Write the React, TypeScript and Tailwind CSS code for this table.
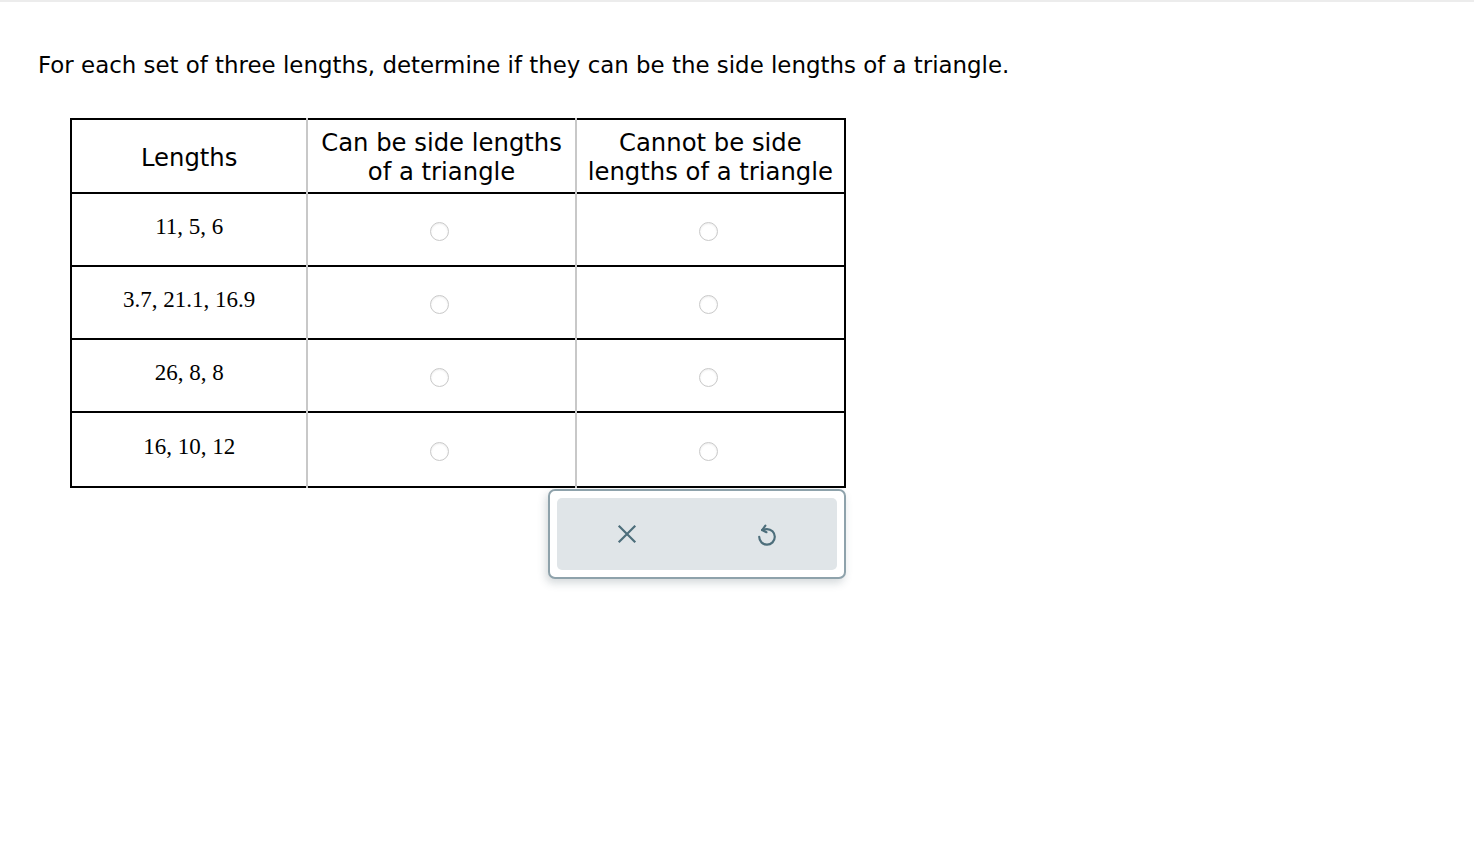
import React from "react";

const rows = ["11, 5, 6", "3.7, 21.1, 16.9", "26, 8, 8", "16, 10, 12"];

function Radio() {
  return (
    <span className="inline-block w-[19px] h-[19px] rounded-full border border-[#c9c9c9] bg-white shadow-[inset_0_1px_2px_rgba(0,0,0,0.08)] translate-y-[5px] -translate-x-[2px]" />
  );
}

export default function App() {
  return (
    <div className="min-h-screen bg-white border-t-2 border-[#ececec] pl-[38px] pt-[49px] text-black">
      <p className="font-['DejaVu_Sans',Verdana,sans-serif] text-[22.9px] leading-[28px]">
        For each set of three lengths, determine if they can be the side lengths of a triangle.
      </p>

      <div className="ml-[32px] mt-[39px] w-[776px]">
        <table className="border-collapse border-2 border-black w-[776px]">
          <thead>
            <tr className="h-[74px] border-b-2 border-black font-['DejaVu_Sans',Verdana,sans-serif] text-[24.3px] leading-[29px]">
              <th className="w-[237px] pt-[2px] font-normal border-r-2 border-[#c8c8c8]">Lengths</th>
              <th className="w-[269px] pt-[2px] font-normal border-r-2 border-[#c8c8c8]">
                Can be side lengths
                <br />
                of a triangle
              </th>
              <th className="w-[270px] pt-[2px] font-normal">
                Cannot be side
                <br />
                lengths of a triangle
              </th>
            </tr>
          </thead>
          <tbody>
            {rows.map((r, i) => (
              <tr
                key={r}
                className={`${i === 3 ? "h-[75px]" : "h-[73px] border-b-2 border-black"}`}
              >
                <td className="text-center pb-[5px] font-['Liberation_Serif','Times_New_Roman',serif] text-[23px] border-r-2 border-[#c8c8c8]">
                  {r}
                </td>
                <td className="text-center border-r-2 border-[#c8c8c8]">
                  <Radio />
                </td>
                <td className="text-center">
                  <Radio />
                </td>
              </tr>
            ))}
          </tbody>
        </table>

        <div className="flex justify-end mt-[1px]">
          <div className="w-[298px] h-[90px] border-2 border-[#8ea2ab] rounded-[7px] bg-white p-[7px] shadow-[-2px_4px_8px_rgba(60,80,90,0.22)]">
            <div className="flex h-full rounded-[5px] bg-[#e0e5e8]">
              <button className="flex-1 flex items-center justify-center">
                <svg width="24" height="24" viewBox="0 0 24 24" fill="none" stroke="#4d6e7b" strokeWidth="2.2" strokeLinecap="square">
                  <path d="M4.5 4.5 L19.5 19.5 M19.5 4.5 L4.5 19.5" />
                </svg>
              </button>
              <button className="flex-1 flex items-center justify-center pt-[4px]">
                <svg width="26" height="26" viewBox="0 0 24 24" fill="none" stroke="#4d6e7b" strokeWidth="2" strokeLinecap="round" strokeLinejoin="round">
                  <path d="M10.5 2.5 L7.5 6.5 L11.5 8.5" />
                  <path d="M7.5 6.5 Q10 5.6 12 5.6 A7.2 7.2 0 1 1 4.8 12.8" />
                </svg>
              </button>
            </div>
          </div>
        </div>
      </div>
    </div>
  );
}
